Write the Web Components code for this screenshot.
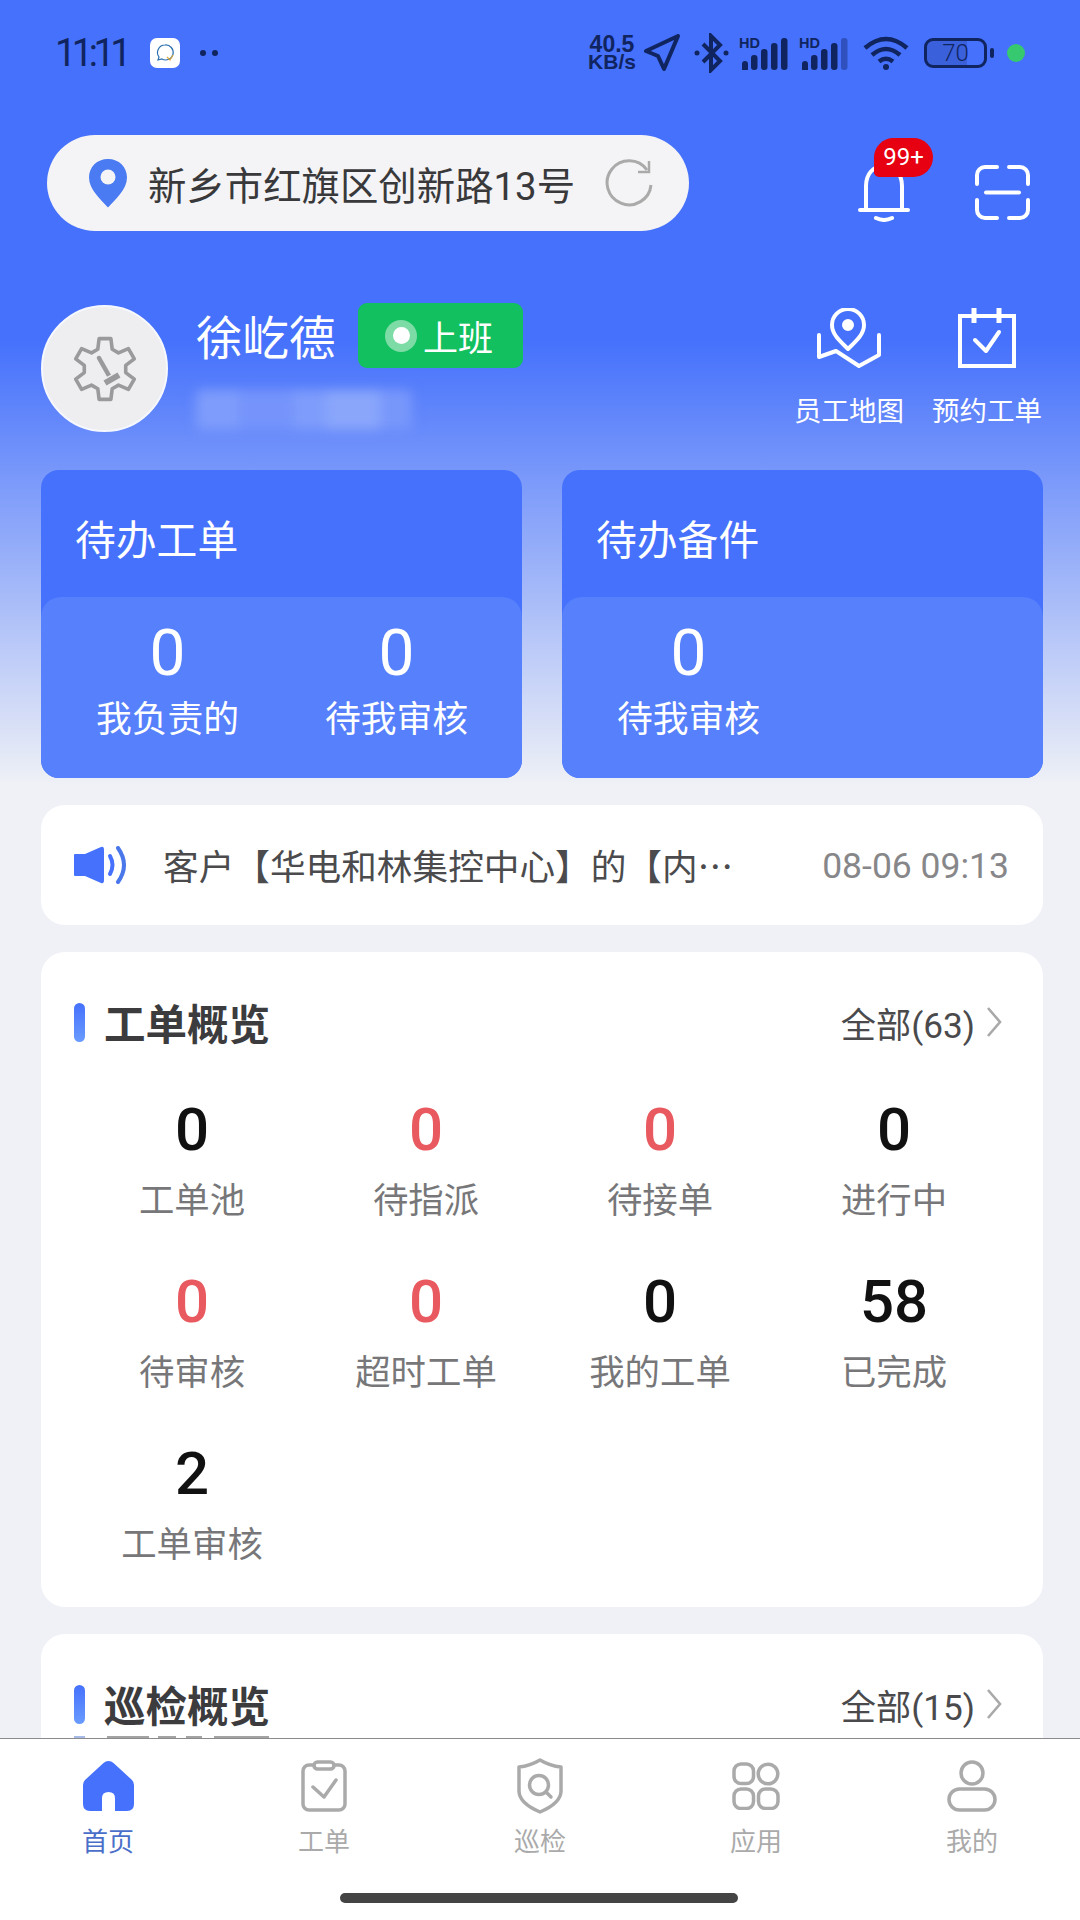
<!DOCTYPE html>
<html lang="zh-CN">
<head>
<meta charset="utf-8">
<title>首页</title>
<style>
  html, body { margin: 0; padding: 0; background: #f0f1f6; }
</style>
</head>
<body>
<app-shell>
  <status-bar></status-bar>
  <top-bar address="新乡市红旗区创新路13号"></top-bar>
  <user-row name="徐屹德" state="上班"></user-row>
  <div style="display:flex;gap:40px;padding:0 37px 0 41px;margin-top:0">
    <pending-card heading="待办工单">
      <pending-stat value="0" label="我负责的"></pending-stat>
      <pending-stat value="0" label="待我审核"></pending-stat>
    </pending-card>
    <pending-card heading="待办备件">
      <pending-stat value="0" label="待我审核"></pending-stat>
    </pending-card>
  </div>
  <scroll-area>
    <notice-bar time="08-06 09:13">客户【华电和林集控中心】的【内…</notice-bar>
    <overview-card heading="工单概览" total="全部(63)">
      <overview-stat value="0" label="工单池"></overview-stat>
      <overview-stat value="0" label="待指派" alert></overview-stat>
      <overview-stat value="0" label="待接单" alert></overview-stat>
      <overview-stat value="0" label="进行中"></overview-stat>
      <overview-stat value="0" label="待审核" alert></overview-stat>
      <overview-stat value="0" label="超时工单" alert></overview-stat>
      <overview-stat value="0" label="我的工单"></overview-stat>
      <overview-stat value="58" label="已完成"></overview-stat>
      <overview-stat value="2" label="工单审核"></overview-stat>
    </overview-card>
    <overview-card heading="巡检概览" total="全部(15)"></overview-card>
  </scroll-area>
  <tab-bar>
    <tab-item icon="home" label="首页" active></tab-item>
    <tab-item icon="order" label="工单"></tab-item>
    <tab-item icon="shield" label="巡检"></tab-item>
    <tab-item icon="apps" label="应用"></tab-item>
    <tab-item icon="me" label="我的"></tab-item>
  </tab-bar>
</app-shell>

<script>
const FONT = `Roboto, "Noto Sans CJK SC", sans-serif`;
const NAVY = '#10245f';

// cog outline for the default avatar
function cogPath(cx, cy) {
  const pts = [];
  for (let i = 0; i < 6; i++) {
    const a = -90 + i * 60;
    [[-20, 21], [-11, 31], [11, 31], [20, 21]].forEach(([d, r]) => {
      const t = (a + d) * Math.PI / 180;
      pts.push((cx + r * Math.cos(t)).toFixed(1) + ' ' + (cy + r * Math.sin(t)).toFixed(1));
    });
  }
  return 'M' + pts.join('L') + 'Z';
}

const ICONS = {
  pin: `<svg width="40" height="50" viewBox="0 0 40 50"><path d="M20 1C9 1 1 9 1 19.500c0 12 12 22 19 30 7-8 19-18 19-30C39 9 31 1 20 1z" fill="#4a7bf2"/><circle cx="20" cy="19" r="7.500" fill="#f4f4f6"/></svg>`,
  refresh: `<svg width="48" height="48" viewBox="0 0 48 48" fill="none" stroke="#aaa" stroke-width="3"><path d="M42 11A22 22 0 1 0 46 26"/><path d="M44 2V13H33" stroke-width="2.500"/></svg>`,
  bell: `<svg width="52" height="60" viewBox="0 0 52 60" fill="none" stroke="#fff" stroke-width="4" stroke-linecap="round"><path d="M8 47V24C8 12 15 4 26 4s18 8 18 20v23"/><path d="M2 48H50"/><path d="M18 56q8 4 16 0"/></svg>`,
  scan: `<svg width="55" height="55" viewBox="0 0 55 55" fill="none" stroke="#fff" stroke-width="4" stroke-linecap="round"><path d="M2 19V10a8 8 0 0 1 8-8H22"/><path d="M34 2H45a8 8 0 0 1 8 8V19"/><path d="M11 27.500H44"/><path d="M2 35V45a8 8 0 0 0 8 8H22"/><path d="M34 53H45a8 8 0 0 0 8-8V35"/></svg>`,
  map: `<svg width="64" height="60" viewBox="0 0 64 60" fill="none" stroke="#fff" stroke-width="4" stroke-linecap="round" stroke-linejoin="round"><path d="M31 41C24 34 15 27 15 17a16 16 0 0 1 32 0c0 10-9 17-16 24z"/><circle cx="31" cy="17" r="4" fill="#fff"/><path d="M2 27V49L19 43 42 58 62 47V27"/></svg>`,
  calendar: `<svg width="60" height="60" viewBox="0 0 60 60" fill="none" stroke="#fff" stroke-width="4"><rect x="3" y="8" width="54" height="50"/><path d="M17 0V15M42 0V15" stroke-width="5"/><path d="M18 32L29 43 42 24" stroke-linecap="round" stroke-linejoin="round"/></svg>`,
  speaker: `<svg width="56" height="38" viewBox="0 0 56 38" fill="none"><path d="M0 9Q0 8 1 8H11L27 1Q30 0 30 4V34Q30 38 27 37L11 30H1Q0 30 0 29Z" fill="#4571fc"/><path d="M36 10Q41 19 36 28" stroke="#4571fc" stroke-width="4" stroke-linecap="round"/><path d="M44 2Q56 19 44 36" stroke="#4a78ea" stroke-width="4" stroke-linecap="round"/></svg>`,
  chevron: `<svg width="16" height="32" viewBox="0 0 16 32" fill="none" stroke="#a9a9a9" stroke-width="2.600"><path d="M2 2L14 16 2 30"/></svg>`,
  home: `<svg width="51" height="52" viewBox="0 0 51 52"><path d="M25.500 1q3 0 5 2L49 20q2 2 2 5V44q0 7-7 7H32V38q0-6-6.500-6T19 38V51H7q-7 0-7-7V25q0-3 2-5L20.500 3q2-2 5-2z" fill="#4571fc"/></svg>`,
  order: `<svg width="46" height="52" viewBox="0 0 46 52" fill="none" stroke="#aaa" stroke-width="3.500" stroke-linecap="round" stroke-linejoin="round"><path d="M13 5H8a6 6 0 0 0-6 6V44a6 6 0 0 0 6 6H38a6 6 0 0 0 6-6V11a6 6 0 0 0-6-6H33"/><rect x="13" y="2" width="20" height="7" rx="3.500"/><path d="M12 27L23 37 35 20"/></svg>`,
  shield: `<svg width="46" height="56" viewBox="0 0 46 56" fill="none" stroke="#aaa" stroke-width="3.500" stroke-linejoin="round" stroke-linecap="round"><path d="M23 2Q33 8 44 9V33Q44 45 23 54 2 45 2 33V9Q13 8 23 2Z"/><circle cx="22" cy="27" r="9.500"/><path d="M29 34L34 39"/></svg>`,
  apps: `<svg width="48" height="48" viewBox="0 0 48 48" fill="none" stroke="#aaa" stroke-width="3.500"><rect x="2" y="2" width="19.500" height="19.500" rx="7"/><circle cx="36" cy="12" r="9.800"/><rect x="2" y="27" width="19.500" height="19.500" rx="7"/><rect x="26.500" y="27" width="19.500" height="19.500" rx="7"/></svg>`,
  me: `<svg width="52" height="52" viewBox="0 0 52 52" fill="none" stroke="#aaa" stroke-width="3.500"><circle cx="26" cy="13" r="11"/><rect x="3" y="29" width="46" height="21" rx="10.500"/></svg>`,
};

class AppIcon extends HTMLElement {
  constructor() {
    super();
    this.attachShadow({ mode: 'open' });
    this.shadowRoot.innerHTML = `
      <style>:host { display: inline-flex; flex: none; } svg { display: block; }</style>
      ${ICONS[this.getAttribute('name')] || ''}
    `;
  }
}

class AppShell extends HTMLElement {
  constructor() {
    super();
    this.attachShadow({ mode: 'open' });
    this.shadowRoot.innerHTML = `
      <style>
        :host {
          display: flex;
          flex-direction: column;
          width: 1080px;
          height: 1920px;
          overflow: hidden;
          font-family: ${FONT};
          background: linear-gradient(180deg, #4571fc 0, #4571fc 340px, #eff1f6 785px, #f0f1f6 100%);
        }
      </style>
      <slot></slot>
    `;
  }
}

class SignalIcon extends HTMLElement {
  constructor() {
    super();
    this.attachShadow({ mode: 'open' });
    const last = this.hasAttribute('weak') ? '#2f50bd' : NAVY;
    this.shadowRoot.innerHTML = `
      <style>:host { display: inline-flex; flex: none; } svg { display: block; }</style>
      <svg width="52" height="34" viewBox="0 0 52 34">
        <text x="0" y="12" font-family="Liberation Sans, sans-serif" font-weight="700" font-size="14.500" fill="${NAVY}">HD</text>
        <path d="M3 31v-3a3 3 0 0 1 6 0v6H3z" fill="${NAVY}"/>
        <rect x="12" y="19" width="6.500" height="15" rx="3" fill="${NAVY}"/>
        <rect x="22" y="13" width="6.500" height="21" rx="3" fill="${NAVY}"/>
        <rect x="32" y="7" width="6.500" height="27" rx="3" fill="${NAVY}"/>
        <rect x="42" y="2" width="6.500" height="32" rx="3" fill="${last}"/>
      </svg>
    `;
  }
}

class StatusBar extends HTMLElement {
  constructor() {
    super();
    this.attachShadow({ mode: 'open' });
    this.shadowRoot.innerHTML = `
      <style>
        :host { display: flex; align-items: center; height: 105px; padding: 0 55px 0 55px; box-sizing: border-box; color: ${NAVY}; }
        .time { font-size: 38px; letter-spacing: -4.500px; width: 95px; line-height: 1; }
        .app { width: 30px; height: 30px; background: #fff; border-radius: 7px; display: flex; align-items: center; justify-content: center; }
        .dots { display: flex; gap: 6px; margin-left: 20px; }
        .dots i { width: 6px; height: 6px; border-radius: 50%; background: ${NAVY}; }
        .right { margin-left: auto; display: flex; align-items: center; }
        .net { font-family: "Liberation Sans", sans-serif; font-weight: 700; width: 50px; text-align: center; line-height: 17px; font-size: 21px; margin-right: 7px; white-space: nowrap; }
        .net b { display: block; font-size: 23px; }
        svg { display: block; flex: none; }
        .batt { position: relative; width: 63px; height: 30px; box-sizing: border-box; border: 3px solid ${NAVY}; border-radius: 9px; background: linear-gradient(90deg, #3a60db 70%, transparent 70%); text-align: center; font-size: 24px; line-height: 24px; font-weight: 300; }
        .nub { width: 4px; height: 10px; background: ${NAVY}; border-radius: 2px; margin: 0 13px 0 3px; }
        .led { width: 18px; height: 18px; border-radius: 50%; background: #36c96f; }
      </style>
      <span class="time">11:11</span>
      <span class="app">
        <svg width="22" height="22" viewBox="0 0 22 22" fill="none"><path d="M11 3a7.500 7.500 0 0 0-6 12l-1 3 4-1a7.500 7.500 0 1 0 3-14z" stroke="#2a6fb0" stroke-width="1.200"/><path d="M13 15l3 3 3-5" stroke="#e0a93c" stroke-width="1.200"/></svg>
      </span>
      <span class="dots"><i></i><i></i></span>
      <span class="right">
        <span class="net"><b>40.5</b>KB/s</span>
        <svg width="36" height="38" viewBox="0 0 36 38" fill="none" stroke="${NAVY}" stroke-width="4" stroke-linejoin="round"><path d="M2 17L34 2 20 35 14 22Z"/></svg>
        <svg style="margin-left:14px" width="35" height="40" viewBox="0 0 35 40" fill="none" stroke="${NAVY}" stroke-width="4"><path d="M9 11L26 28 17 37V3L26 12 9 29"/><circle cx="3" cy="20" r="2.500" fill="${NAVY}" stroke="none"/><circle cx="32" cy="20" r="2.500" fill="${NAVY}" stroke="none"/></svg>
        <signal-icon style="margin-left:10px"></signal-icon>
        <signal-icon style="margin-left:8px" weak></signal-icon>
        <svg style="margin-left:12px" width="46" height="34" viewBox="0 0 46 34" fill="none" stroke="${NAVY}" stroke-width="4.500"><path d="M2 12Q23 -6 44 12"/><path d="M9 19Q23 7 37 19"/><path d="M16 25.500Q23 20 30 25.500"/><circle cx="23" cy="31" r="3" fill="${NAVY}" stroke="none"/></svg>
        <span class="batt" style="margin-left:15px">70</span>
        <span class="nub"></span>
        <span class="led"></span>
      </span>
    `;
  }
}

class TopBar extends HTMLElement {
  constructor() {
    super();
    this.attachShadow({ mode: 'open' });
    this.shadowRoot.innerHTML = `
      <style>
        :host { display: flex; align-items: center; height: 96px; margin-top: 30px; padding-left: 47px; }
        .pill { width: 642px; height: 96px; box-sizing: border-box; border-radius: 48px; background: #f4f4f6; display: flex; align-items: center; padding-left: 41px; }
        .addr { font-size: 38.400px; color: #39393b; margin-left: 20px; white-space: nowrap; width: 457px; }
        .bell { position: relative; margin-left: 169px; margin-top: 18px; display: flex; }
        .badge { position: absolute; left: 16px; top: -24px; width: 59px; height: 39px; background: #e60012; border-radius: 24px 24px 24px 6px; color: #fff; font-size: 24px; line-height: 39px; text-align: center; }
        .scan { margin-left: 65px; margin-top: 19px; display: flex; }
      </style>
      <div class="pill">
        <app-icon name="pin"></app-icon>
        <span class="addr">${this.getAttribute('address')}</span>
        <app-icon name="refresh"></app-icon>
      </div>
      <div class="bell"><app-icon name="bell"></app-icon><span class="badge">99+</span></div>
      <div class="scan"><app-icon name="scan"></app-icon></div>
    `;
  }
}

class UserRow extends HTMLElement {
  constructor() {
    super();
    this.attachShadow({ mode: 'open' });
    this.shadowRoot.innerHTML = `
      <style>
        :host { display: flex; height: 167px; margin-top: 72px; padding: 0 38px 0 41px; color: #fff; }
        .avatar { width: 127px; height: 127px; margin-top: 2px; box-sizing: border-box; border-radius: 50%; background: #eeeef0; border: 2px solid #f6f8ff; display: flex; align-items: center; justify-content: center; flex: none; }
        .info { margin-left: 28px; }
        .line { display: flex; align-items: center; height: 65px; }
        .name { font-size: 46.500px; line-height: 65px; width: 162px; margin-top: 8px; }
        .state { width: 165px; height: 65px; border-radius: 9px; background: #12c05f; display: flex; align-items: center; padding-left: 27px; box-sizing: border-box; font-size: 35px; }
        .dot { width: 32px; height: 32px; border-radius: 50%; background: #7ddba6; display: flex; align-items: center; justify-content: center; margin-right: 6px; }
        .dot i { width: 17px; height: 17px; border-radius: 50%; background: #fff; }
        .masked { width: 216px; height: 40px; margin-top: 22px; border-radius: 6px; filter: blur(6px); background: linear-gradient(90deg, #7e9cfb 0 20%, #7593fb 20% 45%, #7e9cfb 45% 60%, #8aa6fb 60% 85%, #7897fb 85%); }
        .actions { margin-left: auto; display: flex; gap: 28px; }
        .action { width: 110px; display: flex; flex-direction: column; align-items: center; }
        .action app-icon { margin-top: 5px; height: 60px; }
        .action span { font-size: 27.500px; line-height: 40px; margin-top: 24px; white-space: nowrap; }
      </style>
      <div class="avatar">
        <svg width="66" height="66" viewBox="0 0 66 66" fill="none" stroke="#9a9a9c" stroke-width="3.600" stroke-linejoin="round">
          <path d="${cogPath(33, 33)}"/>
          <path d="M27 22L40 45" stroke-width="4.500" stroke-linecap="round"/>
          <path d="M31 48L50 38" stroke="#eeeef0" stroke-width="9"/>
          <path d="M33 47L47 39" stroke-width="6"/>
        </svg>
      </div>
      <div class="info">
        <div class="line">
          <span class="name">${this.getAttribute('name')}</span>
          <span class="state"><span class="dot"><i></i></span>${this.getAttribute('state')}</span>
        </div>
        <div class="masked"></div>
      </div>
      <div class="actions">
        <div class="action"><app-icon name="map"></app-icon><span>员工地图</span></div>
        <div class="action"><app-icon name="calendar"></app-icon><span>预约工单</span></div>
      </div>
    `;
  }
}

class PendingCard extends HTMLElement {
  constructor() {
    super();
    this.attachShadow({ mode: 'open' });
    this.shadowRoot.innerHTML = `
      <style>
        :host { display: block; width: 481px; height: 308px; border-radius: 18px; overflow: hidden; background: #4571fc; color: #fff; }
        .head { height: 127px; box-sizing: border-box; padding: 42px 0 0 34px; font-size: 40.800px; line-height: 58px; }
        .body { height: 181px; border-radius: 20px 20px 0 0; background: #5680fc; display: grid; grid-template-columns: 229px 229px; padding-left: 12px; align-content: start; }
      </style>
      <div class="head">${this.getAttribute('heading')}</div>
      <div class="body"><slot></slot></div>
    `;
  }
}

class PendingStat extends HTMLElement {
  constructor() {
    super();
    this.attachShadow({ mode: 'open' });
    this.shadowRoot.innerHTML = `
      <style>
        :host { display: block; text-align: center; }
        .value { font-size: 64px; font-weight: 400; line-height: 76px; margin-top: 19px; }
        .label { font-size: 35.800px; line-height: 50px; margin-top: 3px; }
      </style>
      <div class="value">${this.getAttribute('value')}</div>
      <div class="label">${this.getAttribute('label')}</div>
    `;
  }
}

class ScrollArea extends HTMLElement {
  constructor() {
    super();
    this.attachShadow({ mode: 'open' });
    this.shadowRoot.innerHTML = `
      <style>
        :host { display: flex; flex-direction: column; gap: 27px; flex: 1; min-height: 0; overflow: hidden; padding: 27px 37px 0 41px; }
      </style>
      <slot></slot>
    `;
  }
}

class NoticeBar extends HTMLElement {
  constructor() {
    super();
    this.attachShadow({ mode: 'open' });
    this.shadowRoot.innerHTML = `
      <style>
        :host { display: flex; align-items: center; flex: none; height: 120px; border-radius: 24px; background: #fff; padding: 0 34px 0 33px; }
        .text { font-family: "Noto Sans CJK SC", sans-serif; font-size: 35.650px; color: #4b4b4d; margin-left: 33px; margin-bottom: 2px; white-space: nowrap; }
        .time { margin-left: auto; margin-top: 2px; font-size: 35.500px; color: #87878a; white-space: nowrap; }
      </style>
      <app-icon name="speaker"></app-icon>
      <span class="text"><slot></slot></span>
      <span class="time">${this.getAttribute('time')}</span>
    `;
  }
}

class OverviewCard extends HTMLElement {
  constructor() {
    super();
    this.attachShadow({ mode: 'open' });
    this.shadowRoot.innerHTML = `
      <style>
        :host { display: block; flex: none; border-radius: 24px; background: #fff; padding: 40px 32px 37px 33px; }
        .head { display: flex; align-items: center; height: 60px; margin-bottom: 43px; }
        .bar { width: 11px; height: 39px; border-radius: 6px; background: linear-gradient(180deg, #4571fc, #6a9bff); margin-right: 19px; }
        h2 { margin: 0; font-size: 41.500px; font-weight: 700; color: #3c3c3e; }
        .total { margin-left: auto; font-size: 35.200px; color: #4a4a4c; margin-right: 11px; }
        .chev { margin-right: 9px; display: flex; }
        .grid { display: grid; grid-template-columns: repeat(4, 234px); row-gap: 41px; padding-left: 1px; }
      </style>
      <div class="head">
        <span class="bar"></span>
        <h2>${this.getAttribute('heading')}</h2>
        <span class="total">${this.getAttribute('total')}</span>
        <span class="chev"><app-icon name="chevron"></app-icon></span>
      </div>
      <div class="grid"><slot></slot></div>
    `;
  }
}

class OverviewStat extends HTMLElement {
  constructor() {
    super();
    this.attachShadow({ mode: 'open' });
    this.shadowRoot.innerHTML = `
      <style>
        :host { display: block; text-align: center; }
        .value { font-size: 60px; font-weight: 500; line-height: 70px; color: #111; }
        :host([alert]) .value { color: #e85a5f; }
        .label { font-size: 35.400px; line-height: 50px; margin-top: 11px; color: #77777a; white-space: nowrap; }
      </style>
      <div class="value">${this.getAttribute('value')}</div>
      <div class="label">${this.getAttribute('label')}</div>
    `;
  }
}

class TabBar extends HTMLElement {
  constructor() {
    super();
    this.attachShadow({ mode: 'open' });
    this.shadowRoot.innerHTML = `
      <style>
        :host { display: block; flex: none; height: 182px; box-sizing: border-box; background: #fff; border-top: 1.500px solid #8b8b8d; position: relative; }
        /* sliver of the card title that shows through above the line */
        .ghost { position: absolute; left: 74px; top: -3px; width: 195px; height: 2px; background: linear-gradient(90deg, #3c66c8 0 11px, transparent 11px 33px, #333 33px 75px, transparent 75px 84px, #333 84px 102px, transparent 102px 112px, #333 112px 128px, transparent 128px 140px, #333 140px); opacity: .45; }
        .tabs { display: flex; }
        .home { width: 398px; height: 10px; border-radius: 5px; background: #444; position: absolute; left: 340px; top: 154px; }
      </style>
      <div class="ghost"></div>
      <div class="tabs"><slot></slot></div>
      <div class="home"></div>
    `;
  }
}

class TabItem extends HTMLElement {
  constructor() {
    super();
    this.attachShadow({ mode: 'open' });
    this.shadowRoot.innerHTML = `
      <style>
        :host { display: flex; flex-direction: column; align-items: center; width: 216px; color: #aaa; }
        :host([active]) { color: #4a6fc9; }
        .ic { height: 56px; margin-top: 19px; display: flex; align-items: center; }
        .tx { font-size: 26px; line-height: 40px; margin-top: 8px; }
      </style>
      <div class="ic"><app-icon name="${this.getAttribute('icon')}"></app-icon></div>
      <div class="tx">${this.getAttribute('label')}</div>
    `;
  }
}

customElements.define('app-icon', AppIcon);
customElements.define('signal-icon', SignalIcon);
customElements.define('app-shell', AppShell);
customElements.define('status-bar', StatusBar);
customElements.define('top-bar', TopBar);
customElements.define('user-row', UserRow);
customElements.define('pending-card', PendingCard);
customElements.define('pending-stat', PendingStat);
customElements.define('scroll-area', ScrollArea);
customElements.define('notice-bar', NoticeBar);
customElements.define('overview-card', OverviewCard);
customElements.define('overview-stat', OverviewStat);
customElements.define('tab-bar', TabBar);
customElements.define('tab-item', TabItem);
</script>
</body>
</html>
